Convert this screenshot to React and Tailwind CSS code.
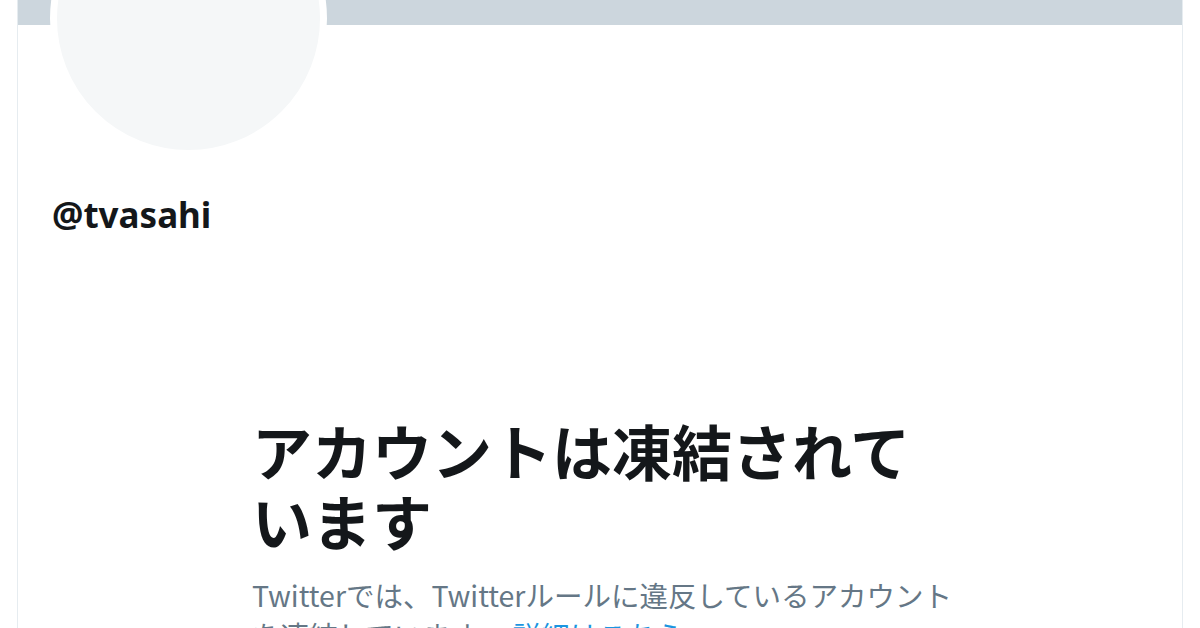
const App = () => {
  return (
    <div className="min-h-screen bg-white px-[17px] overflow-hidden">
      <div className="h-[628px] border-x border-[#e6ecf0] flex flex-col">
        <div className="h-[25px] bg-[#ccd6dd] shrink-0" />
        <div className="ml-[32px] -mt-[145px] w-[277px] h-[277px] rounded-full border-[7px] border-white bg-[#f5f7f8] shrink-0" />
        <div
          className="ml-[34px] mt-[38px] text-[35px] leading-[40px] font-bold text-[#14171a]"
          style={{ fontFamily: '"Noto Sans", "Noto Sans CJK JP", sans-serif' }}
        >
          @tvasahi
        </div>
        <div
          className="ml-[234px] mt-[180px] w-[720px]"
          style={{ fontFamily: '"Noto Sans CJK JP", "Noto Sans", sans-serif' }}
        >
          <h1 className="text-[60px] leading-[70px] font-semibold text-[#14171a]">
            アカウントは凍結されて
            <br />
            います
          </h1>
          <p className="mt-[20px] text-[28.5px] leading-[40px] text-[#657786] w-[720px]">
            Twitterでは、Twitterルールに違反しているアカウント
            <br />
            を凍結しています。
            <a href="#" className="text-[#1b95e0] ml-[8px]">
              詳細はこちら
            </a>
          </p>
        </div>
      </div>
    </div>
  );
};

export default App;
